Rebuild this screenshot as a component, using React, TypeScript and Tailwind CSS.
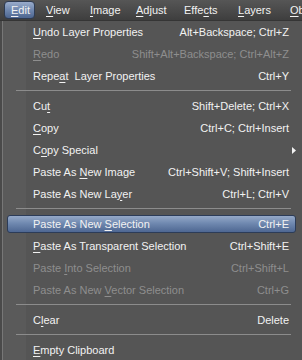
import React from "react";

type Item =
  | { sep: true }
  | {
      sep?: false;
      pre: string;
      u: string;
      post: string;
      sc?: string;
      dis?: boolean;
      hl?: boolean;
      arrow?: boolean;
    };

const items: Item[] = [
  { pre: "", u: "U", post: "ndo Layer Properties", sc: "Alt+Backspace; Ctrl+Z" },
  { pre: "", u: "R", post: "edo", sc: "Shift+Alt+Backspace; Ctrl+Alt+Z", dis: true },
  { pre: "Repe", u: "a", post: "t  Layer Properties", sc: "Ctrl+Y" },
  { sep: true },
  { pre: "Cu", u: "t", post: "", sc: "Shift+Delete; Ctrl+X" },
  { pre: "", u: "C", post: "opy", sc: "Ctrl+C; Ctrl+Insert" },
  { pre: "C", u: "o", post: "py Special", arrow: true },
  { pre: "Paste As ", u: "N", post: "ew Image", sc: "Ctrl+Shift+V; Shift+Insert" },
  { pre: "Paste As New La", u: "y", post: "er", sc: "Ctrl+L; Ctrl+V" },
  { sep: true },
  { pre: "Paste As New ", u: "S", post: "election", sc: "Ctrl+E", hl: true },
  { pre: "", u: "P", post: "aste As Transparent Selection", sc: "Ctrl+Shift+E" },
  { pre: "Paste ", u: "I", post: "nto Selection", sc: "Ctrl+Shift+L", dis: true },
  { pre: "Paste As New ", u: "V", post: "ector Selection", sc: "Ctrl+G", dis: true },
  { sep: true },
  { pre: "C", u: "l", post: "ear", sc: "Delete" },
  { sep: true },
  { pre: "", u: "E", post: "mpty Clipboard" },
];

const bar: { pre: string; u: string; post: string; w: string }[] = [
  { pre: "", u: "V", post: "iew", w: "w-[44px]" },
  { pre: "", u: "I", post: "mage", w: "w-[46px]" },
  { pre: "", u: "A", post: "djust", w: "w-[48px]" },
  { pre: "Effe", u: "c", post: "ts", w: "w-[54px]" },
  { pre: "", u: "L", post: "ayers", w: "w-[52px]" },
  { pre: "", u: "O", post: "bjects", w: "w-[60px]" },
];

export default function App() {
  return (
    <div
      className="w-[302px] h-[360px] overflow-hidden bg-[#4d4d4d] text-[11px] leading-none text-[#f2f2f2] select-none"
      style={{ fontFamily: '"Liberation Sans", Arial, sans-serif' }}
    >
      {/* menu bar */}
      <div className="h-[21px] flex items-start bg-[linear-gradient(to_bottom,#565656,#484848_60%,#3e3e3e)] border-b border-[#353535] whitespace-nowrap">
        <div className="w-[4px] shrink-0" />
        <div className="mt-[1px] h-[18px] w-[31px] shrink-0 rounded-[4px] border border-[#2e3b52] bg-[linear-gradient(to_bottom,#9aaccb,#6f87ae_50%,#4d6690)] pl-[6px] flex items-center">
          <span>
            <span className="underline underline-offset-2">E</span>dit
          </span>
        </div>
        <div className="w-[11px] shrink-0" />
        {bar.map((b, i) => (
          <div key={i} className={`${b.w} shrink-0 h-[20px] flex items-center`}>
            <span>
              {b.pre}
              <span className="underline underline-offset-2">{b.u}</span>
              {b.post}
            </span>
          </div>
        ))}
      </div>
      {/* body */}
      <div className="flex h-[339px]">
        <div className="w-[2px] shrink-0 bg-[#4a4a4a]" />
        <div className="w-[1px] shrink-0 bg-[#777777]" />
        <div className="flex-1 bg-[linear-gradient(to_right,#5a5a5a_23px,#555555_23px)]">
          {items.map((it, i) =>
            it.sep ? (
              <div key={i} className="h-[8px] pt-[3px] pl-[13px] pr-[11px]">
                <div className="h-px bg-[#8c8c8c]" />
              </div>
            ) : (
              <div key={i} className="h-[22px] pl-[4px] pr-[6px] py-[2px]">
                <div
                  className={`h-[18px] flex items-center justify-between pl-[25px] pr-[6px] rounded-[3px] whitespace-pre border ${
                    it.hl
                      ? "border-[#2c3c58] bg-[linear-gradient(to_bottom,#95a9c8,#7089b0_45%,#4e6792)]"
                      : "border-transparent"
                  } ${it.dis ? "text-[#8e8e8e]" : "text-[#f2f2f2]"}`}
                >
                  <span>
                    {it.pre}
                    <span className="underline underline-offset-2">{it.u}</span>
                    {it.post}
                  </span>
                  {it.sc ? <span>{it.sc}</span> : null}
                  {it.arrow ? (
                    <svg width="4" height="7" viewBox="0 0 4 7" className="mr-[-7px]">
                      <path d="M0 0 L4 3.5 L0 7 Z" fill="#f2f2f2" />
                    </svg>
                  ) : null}
                </div>
              </div>
            )
          )}
        </div>
      </div>
    </div>
  );
}
